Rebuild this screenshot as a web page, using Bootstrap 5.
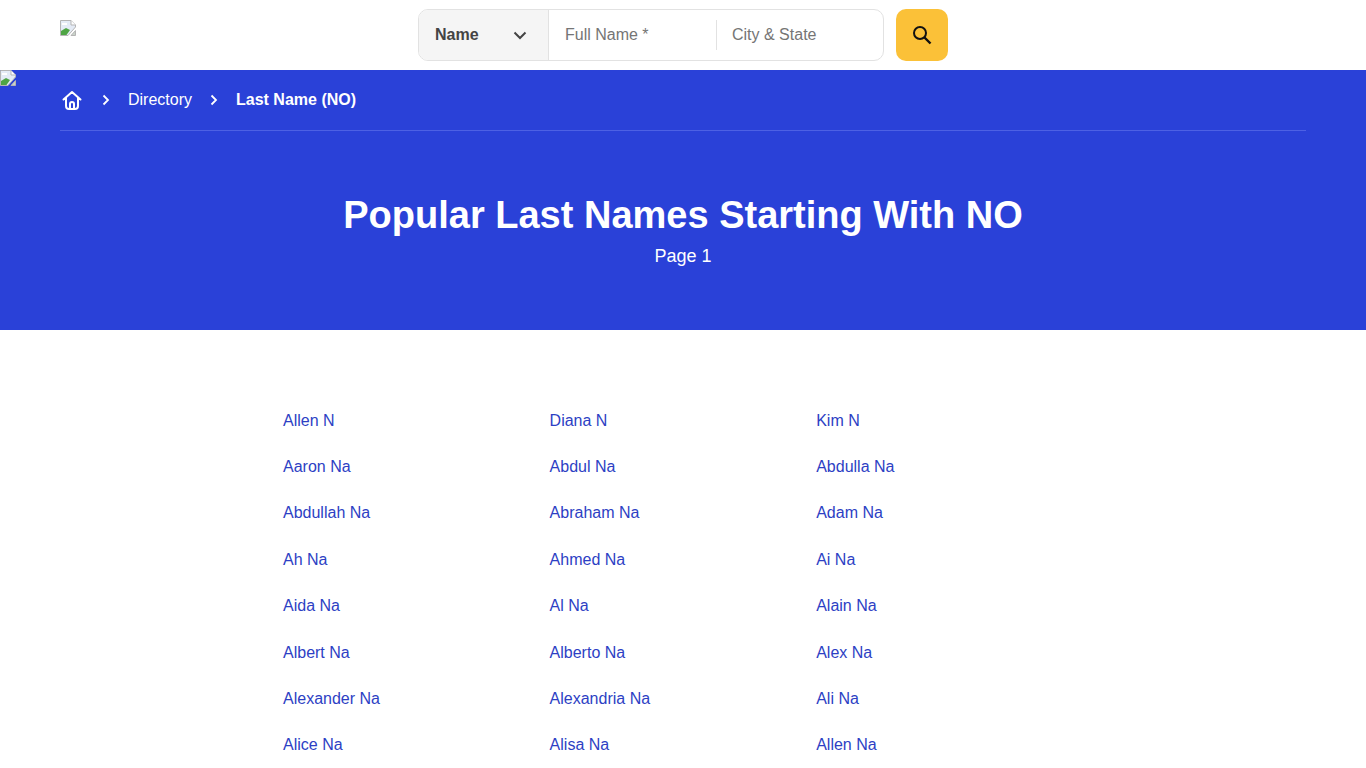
<!DOCTYPE html>
<html lang="en">
<head>
  <meta charset="UTF-8" />
  <title>Popular Last Names Starting With NO</title>
  <link href="https://cdn.jsdelivr.net/npm/bootstrap@5.3.0/dist/css/bootstrap.min.css" rel="stylesheet" />
  <style>
    body {
      font-family: "Liberation Sans", Arial, sans-serif;
      font-size: 16px;
      color: #333;
      background: #fff;
    }
    .top-bar {
      height: 70px;
      padding: 9px 60px 0;
    }
    .logo-slot {
      width: 358px;
      padding-top: 11px;
    }
    .broken-img {
      display: block;
      width: 16px;
      height: 16px;
    }
    .search-box {
      width: 466px;
      height: 52px;
      border: 1px solid #e2e2e2;
      border-radius: 10px;
      overflow: hidden;
    }
    .search-kind {
      width: 130px;
      background: #f5f5f5;
      border-right: 1px solid #e2e2e2;
      padding: 0 21px 0 16px;
      color: #444;
    }
    .search-field {
      color: #757575;
      padding-left: 15px;
    }
    .search-field.first {
      width: 167px;
      padding-left: 16px;
    }
    .field-line {
      width: 1px;
      height: 30px;
      background: #e2e2e2;
    }
    .search-btn {
      width: 52px;
      height: 52px;
      margin-left: 12px;
      background: #fbc138;
      border: 0;
      border-radius: 10px;
    }
    .hero {
      position: relative;
      height: 260px;
      background: #2a41d8;
      color: #fff;
      padding: 0 60px;
    }
    .hero .broken-img {
      position: absolute;
      left: 0;
      top: 0;
    }
    .crumbs {
      height: 61px;
      border-bottom: 1px solid #4d61e4;
    }
    .crumbs a {
      color: #fff;
      text-decoration: none;
    }
    .crumb-sep {
      margin: 0 18px;
    }
    .hero-title {
      font-size: 38px;
      font-weight: 700;
      line-height: 44px;
      margin: 62px 0 0;
    }
    .hero-page {
      font-size: 18px;
      line-height: 22px;
      margin-top: 8px;
    }
    .name-grid {
      width: 800px;
      margin: 67.6px 0 0 283px;
    }
    .name-col {
      width: 266.6px;
    }
    .name-link {
      display: block;
      height: 46.4px;
      line-height: 46.4px;
      color: #2d3fc4;
      text-decoration: none;
    }
  </style>
</head>
<body>

<header class="top-bar d-flex align-items-start bg-white">
  <div class="logo-slot">
    <svg class="broken-img" viewBox="0 0 16 16"><path d="M.5 .5H11L15.5 5V7L8 15.5H.5Z" fill="#e4ebf6" stroke="#b5b5b5"/><path d="M15.5 10.5V15.5H11Z" fill="#c9d3c9" stroke="#b5b5b5"/><path d="M11 .5V5H15.5" fill="#fff" stroke="#b5b5b5"/><path d="M1 15V11L6 8L10 10L6.5 15Z" fill="#4fa545"/><path d="M2 3h5v2H2z" fill="#fff"/></svg>
  </div>
  <form class="search-box d-flex align-items-center bg-white">
    <div class="search-kind h-100 d-flex align-items-center justify-content-between">
      <span class="fw-bold">Name</span>
      <svg width="14" height="9" viewBox="0 0 14 9"><path d="M1.5 1.5L7 7L12.5 1.5" fill="none" stroke="#444" stroke-width="2"/></svg>
    </div>
    <div class="search-field first">Full Name *</div>
    <div class="field-line"></div>
    <div class="search-field">City &amp; State</div>
  </form>
  <button class="search-btn d-flex align-items-center justify-content-center" type="button">
    <svg width="20" height="20" viewBox="0 0 20 20"><circle cx="8" cy="8" r="6" fill="none" stroke="#111" stroke-width="2"/><path d="M12.5 12.5L18.5 18.5" stroke="#111" stroke-width="2.4"/></svg>
  </button>
</header>

<section class="hero">
  <svg class="broken-img" viewBox="0 0 16 16"><path d="M.5 .5H11L15.5 5V7L8 15.5H.5Z" fill="#e4ebf6" stroke="#b5b5b5"/><path d="M15.5 10.5V15.5H11Z" fill="#c9d3c9" stroke="#b5b5b5"/><path d="M11 .5V5H15.5" fill="#fff" stroke="#b5b5b5"/><path d="M1 15V11L6 8L10 10L6.5 15Z" fill="#4fa545"/><path d="M2 3h5v2H2z" fill="#fff"/></svg>
  <nav class="crumbs d-flex align-items-center">
    <a href="#" class="d-flex ms-0">
      <svg width="24" height="24" viewBox="0 0 24 24"><path d="M3.5 11.5L12 4L20.5 11.5M6 9.5V18a3 3 0 0 0 3 3H15a3 3 0 0 0 3-3V9.5M10 21V16a2 2 0 0 1 4 0V21" fill="none" stroke="#fff" stroke-width="2" stroke-linecap="round" stroke-linejoin="round"/></svg>
    </a>
    <svg class="crumb-sep" width="8" height="12" viewBox="0 0 8 12"><path d="M1.5 1.5L6 6L1.5 10.5" fill="none" stroke="#fff" stroke-width="1.8"/></svg>
    <a href="#">Directory</a>
    <svg class="crumb-sep" width="8" height="12" viewBox="0 0 8 12"><path d="M1.5 1.5L6 6L1.5 10.5" fill="none" stroke="#fff" stroke-width="1.8"/></svg>
    <a href="#" class="fw-bold">Last Name (NO)</a>
  </nav>
  <div class="text-center">
    <h1 class="hero-title">Popular Last Names Starting With NO</h1>
    <div class="hero-page">Page 1</div>
  </div>
</section>

<main class="name-grid d-flex" id="names"></main>

<script>
  const names = [
    ['Allen N', 'Aaron Na', 'Abdullah Na', 'Ah Na', 'Aida Na', 'Albert Na', 'Alexander Na', 'Alice Na'],
    ['Diana N', 'Abdul Na', 'Abraham Na', 'Ahmed Na', 'Al Na', 'Alberto Na', 'Alexandria Na', 'Alisa Na'],
    ['Kim N', 'Abdulla Na', 'Adam Na', 'Ai Na', 'Alain Na', 'Alex Na', 'Ali Na', 'Allen Na']
  ];
  const grid = document.getElementById('names');
  names.forEach(col => {
    const div = document.createElement('div');
    div.className = 'name-col';
    col.forEach(n => {
      const a = document.createElement('a');
      a.className = 'name-link';
      a.href = '#';
      a.textContent = n;
      div.appendChild(a);
    });
    grid.appendChild(div);
  });
</script>
<script src="https://cdn.jsdelivr.net/npm/bootstrap@5.3.0/dist/js/bootstrap.bundle.min.js"></script>
</body>
</html>
